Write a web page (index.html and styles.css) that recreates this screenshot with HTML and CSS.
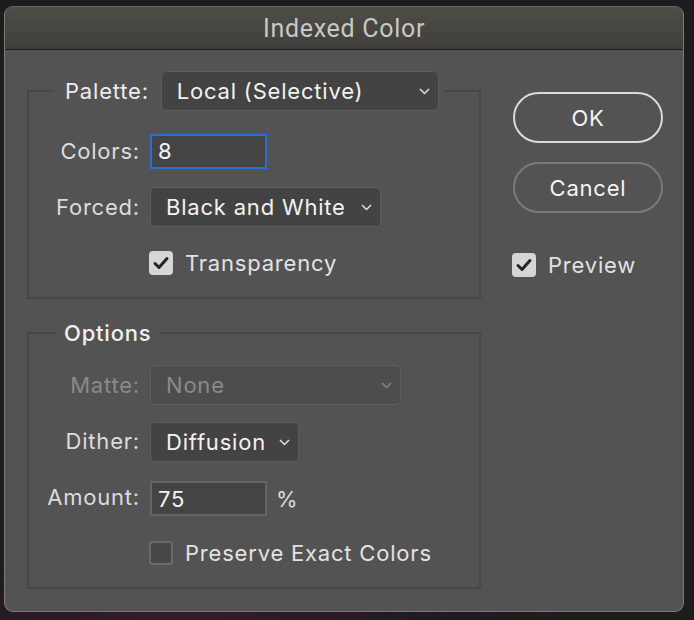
FILE: index.html
```html
<!DOCTYPE html>
<html>

<head>
    <meta charset="utf-8">
    <title>Indexed Color</title>

    <link rel="stylesheet" href="styles.css">
</head>

<body>

    <div class="window">
        <div class="title_bar">Indexed Color</div>

        <div class="dialog_body">
            <div class="left_col">

                <fieldset class="group">
                    <legend class="legend_palette">
                        <span class="legend_text">Palette:</span>
                        <div class="dropdown dd_palette">
                            <span>Local (Selective)</span>
                            <svg class="chevron" width="11" height="7" viewBox="0 0 11 7"><polyline points="1,1 5.5,5.5 10,1" /></svg>
                        </div>
                    </legend>
                    <div class="rows">
                        <label class="row_label">Colors:</label>
                        <input class="num_input focused" type="text" value="8">

                        <label class="row_label">Forced:</label>
                        <div class="dropdown dd_forced">
                            <span>Black and White</span>
                            <svg class="chevron" width="11" height="7" viewBox="0 0 11 7"><polyline points="1,1 5.5,5.5 10,1" /></svg>
                        </div>

                        <span></span>
                        <div class="check_row">
                            <span class="check_box checked">
                                <svg width="24" height="24" viewBox="0 0 24 24"><polyline points="6,12.5 10,16.5 18,7.5" /></svg>
                            </span>
                            <span class="check_text">Transparency</span>
                        </div>
                    </div>
                </fieldset>

                <fieldset class="group group_options">
                    <legend class="legend_options">Options</legend>
                    <div class="rows">
                        <label class="row_label disabled">Matte:</label>
                        <div class="dropdown dd_matte disabled">
                            <span>None</span>
                            <svg class="chevron" width="11" height="7" viewBox="0 0 11 7"><polyline points="1,1 5.5,5.5 10,1" /></svg>
                        </div>

                        <label class="row_label">Dither:</label>
                        <div class="dropdown dd_dither">
                            <span>Diffusion</span>
                            <svg class="chevron" width="11" height="7" viewBox="0 0 11 7"><polyline points="1,1 5.5,5.5 10,1" /></svg>
                        </div>

                        <label class="row_label">Amount:</label>
                        <div class="amount_wrap">
                            <input class="num_input" type="text" value="75">
                            <span class="unit">%</span>
                        </div>

                        <span></span>
                        <div class="check_row">
                            <span class="check_box"></span>
                            <span class="check_text">Preserve Exact Colors</span>
                        </div>
                    </div>
                </fieldset>

            </div>

            <div class="right_col">
                <button class="pill_btn default_btn">OK</button>
                <button class="pill_btn cancel_btn">Cancel</button>
                <div class="check_row preview_row">
                    <span class="check_box checked">
                        <svg width="24" height="24" viewBox="0 0 24 24"><polyline points="6,12.5 10,16.5 18,7.5" /></svg>
                    </span>
                    <span class="check_text">Preview</span>
                </div>
            </div>
        </div>
    </div>

</body>

</html>
```

FILE: styles.css
```css
* {
    box-sizing: border-box;
}

body {
    margin: 0;
    height: 620px;
    overflow: hidden;
    font-family: Inter, "Noto Sans", sans-serif;
    font-size: 22px;
    letter-spacing: 0.8px;
    color: #dedede;
    background: radial-gradient(ellipse 420px 120px at 180px 640px, #3a1a2c 0, #221a1f 60%, transparent 100%), #1d1d1d;
}

.window {
    width: 680px;
    height: 606px;
    margin: 6px 0 0 4px;
    border: 1px solid #7a7a7a;
    border-top-color: #66655f;
    border-radius: 9px;
    background-color: #535353;
    overflow: hidden;
}

.title_bar {
    height: 43px;
    line-height: 44px;
    text-align: center;
    font-family: Roboto, "Liberation Sans", sans-serif;
    font-size: 25px;
    letter-spacing: 0.7px;
    color: #c8c8c6;
    background: linear-gradient(#4e4d48, #403f3b);
    border-bottom: 1px solid #1b1b1a;
}

.dialog_body {
    display: flex;
    padding: 21px 0 0 22px;
}

.left_col {
    width: 454px;
}

.group {
    margin: 0;
    padding: 20px 0 14px 0;
    border: 2px solid #474747;
    min-width: 0;
}

.group_options {
    margin-top: 20px;
    padding-top: 18px;
}

.legend_palette {
    display: flex;
    align-items: center;
    margin-left: 25px;
    padding: 0 6px 0 11px;
}

.legend_text {
    color: #ececec;
    margin-right: 12px;
}

.legend_options {
    margin-left: 26px;
    padding: 0 9px;
    line-height: 28px;
    font-weight: 500;
    color: #f0f0f0;
}

.rows {
    display: grid;
    grid-template-columns: 111px auto;
    grid-auto-rows: 40px;
    column-gap: 10px;
    row-gap: 16px;
    align-items: center;
    justify-items: start;
}

.row_label {
    justify-self: end;
    color: #dcdcdc;
}

.row_label.disabled {
    color: #8a8a8a;
}

.dropdown {
    display: flex;
    align-items: center;
    justify-content: space-between;
    height: 40px;
    padding: 0 8px 0 15px;
    background-color: #434343;
    border: 1px solid #5d5d5d;
    border-radius: 5px;
    color: #f2f2f2;
}

.chevron polyline {
    fill: none;
    stroke: #e0e0e0;
    stroke-width: 1.5;
}

.dd_palette {
    width: 278px;
}

.dd_forced {
    width: 231px;
}

.dd_matte {
    width: 251px;
}

.dd_dither {
    width: 149px;
    margin-top: 2px;
}

.dropdown.disabled {
    background-color: #4d4d4d;
    border-color: #5f5f5f;
    color: #8a8a8a;
}

.dropdown.disabled .chevron polyline {
    stroke: #858585;
}

.num_input {
    width: 117px;
    height: 35px;
    padding: 0 6px;
    border: 2px solid #646464;
    border-radius: 0;
    background-color: #444444;
    color: #f4f4f4;
    font-family: Inter, "Noto Sans", sans-serif;
    font-size: 22px;
    letter-spacing: 0.8px;
    outline: none;
}

.num_input.focused {
    border-color: #2d6dd3;
}

.amount_wrap {
    display: flex;
    align-items: center;
    margin-top: 3px;
}

.unit {
    margin-left: 9px;
    color: #dcdcdc;
}

.check_row {
    display: flex;
    align-items: center;
}

.check_box {
    width: 24px;
    height: 24px;
    margin-left: -1px;
    margin-right: 12px;
    border: 2px solid #6a6a6a;
    border-radius: 4px;
    background-color: #474747;
}

.check_box.checked {
    border: none;
    background-color: #d6d6d6;
}

.check_box svg polyline {
    fill: none;
    stroke: #252525;
    stroke-width: 3;
    stroke-linecap: round;
    stroke-linejoin: round;
}

.check_text {
    color: #e2e2e2;
}

.right_col {
    display: flex;
    flex-direction: column;
    margin-left: 32px;
    padding-top: 21px;
}

.pill_btn {
    width: 150px;
    height: 51px;
    border-radius: 26px;
    background-color: transparent;
    font-family: Inter, "Noto Sans", sans-serif;
    font-size: 22px;
    letter-spacing: 0.8px;
    color: #f4f4f4;
    cursor: pointer;
}

.default_btn {
    border: 2px solid #dadada;
}

.cancel_btn {
    margin-top: 19px;
    border: 2px solid #7a7a7a;
}

.preview_row {
    margin-top: 39px;
}
```
